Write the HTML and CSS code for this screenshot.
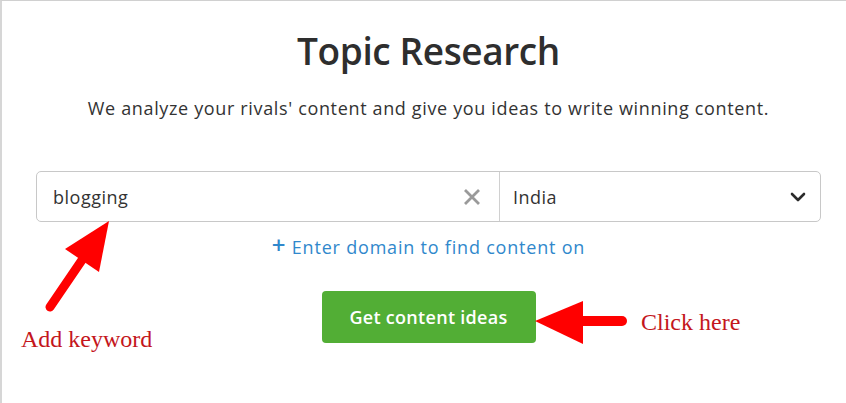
FILE: index.html
```html
<!DOCTYPE html>
<html lang="en">
<head>
  <meta charset="UTF-8" />
  <meta name="viewport" content="width=device-width, initial-scale=1.0"/>
  <title>Topic Research</title>
  <link rel="stylesheet" href="styles.css">
</head>
<body>
  <div class="panel">
    <div class="column">
      <h1>Topic Research</h1>
      <p class="lead">We analyze your rivals' content and give you ideas to write winning content.</p>

      <div class="search">
        <div class="keyword">
          <span class="value">blogging</span>
          <svg class="clear" width="18" height="18" viewBox="0 0 18 18">
            <path d="M2 2 L16 16 M16 2 L2 16" stroke="#9a9a9a" stroke-width="2.8" fill="none"/>
          </svg>
        </div>
        <div class="country">
          <span class="value">India</span>
          <svg class="chevron" width="16" height="10" viewBox="0 0 16 10">
            <path d="M2 2 L8 8 L14 2" stroke="#2b2b2b" stroke-width="2.6" fill="none" stroke-linecap="round" stroke-linejoin="round"/>
          </svg>
        </div>
      </div>

      <a class="domain-link" href="#"><span class="plus">+</span> Enter domain to find content on</a>

      <button class="go">Get content ideas</button>
    </div>

    <!-- annotations drawn over the page -->
    <svg class="arrows" width="846" height="403" viewBox="0 0 846 403">
      <path d="M82 260 L50 307" stroke="#ff0000" stroke-width="9" stroke-linecap="round"/>
      <polygon points="109,221 65,249 99,272" fill="#ff0000"/>
      <path d="M580 321 L622 321" stroke="#ff0000" stroke-width="10" stroke-linecap="round"/>
      <polygon points="535,321 583,301 583,344" fill="#ff0000"/>
    </svg>
    <span class="note note-keyword">Add keyword</span>
    <span class="note note-click">Click here</span>
  </div>
</body>
</html>
```

FILE: styles.css
```css
body {
  margin: 0;
  padding: 0;
  background: #fff;
  font-family: "Open Sans", "Noto Sans", sans-serif;
  color: #333;
}

.panel {
  position: relative;
  height: 403px;
  box-sizing: border-box;
  border-top: 1px solid #d0d0d0;
  border-left: 2px solid #d6d6d6;
  padding-top: 27px;
  overflow: hidden;
}

.column {
  width: 785px;
  margin-left: 34px;
  display: flex;
  flex-direction: column;
  align-items: center;
}

h1 {
  margin: 0;
  font-size: 37px;
  line-height: 46px;
  font-weight: 600;
  letter-spacing: -0.4px;
  color: #2e2e2e;
}

.lead {
  margin: 22px 0 0;
  font-size: 18px;
  line-height: 24px;
  letter-spacing: 0.65px;
  color: #333;
}

.search {
  margin-top: 51px;
  width: 100%;
  height: 51px;
  box-sizing: border-box;
  border: 1px solid #c8c8c8;
  border-radius: 5px;
  display: flex;
}

.keyword {
  width: 463px;
  border-right: 1px solid #d0d0d0;
  display: flex;
  align-items: center;
  padding: 0 18px 0 16px;
  box-sizing: border-box;
}

.country {
  flex: 1;
  display: flex;
  align-items: center;
  padding: 0 14px 0 13px;
}

.value {
  flex: 1;
  font-size: 18px;
  letter-spacing: 0.5px;
  color: #333;
}

.domain-link {
  margin-top: 11px;
  line-height: 24px;
  font-size: 18px;
  letter-spacing: 0.8px;
  color: #3088cc;
  text-decoration: none;
}

.plus {
  font-size: 24px;
  font-weight: 600;
}

.go {
  margin-top: 32px;
  width: 214px;
  height: 52px;
  border: none;
  border-radius: 4px;
  background: #52ae35;
  color: #fff;
  font-family: "Open Sans", "Noto Sans", sans-serif;
  font-size: 18px;
  font-weight: 600;
  letter-spacing: 0.3px;
}

.arrows {
  position: absolute;
  top: -1px;
  left: -2px;
}

.note {
  position: absolute;
  font-family: "Liberation Serif", serif;
  font-size: 24px;
  color: #c4161c;
}

.note-keyword {
  left: 19px;
  top: 325px;
}

.note-click {
  left: 639px;
  top: 308px;
}
```
